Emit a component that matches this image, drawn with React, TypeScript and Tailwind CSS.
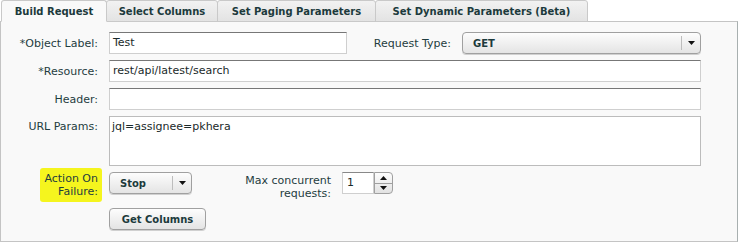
import React from "react";

const font = { fontFamily: '"DejaVu Sans", Verdana, sans-serif' };

function Tab({ label, active, w }: { label: string; active?: boolean; w: string }) {
  return (
    <div
      className={
        "h-[22px] flex items-center justify-center text-[10px] font-bold text-[#1c3a3c] border border-[#c9c9c9] rounded-t-[3px] -mr-px " +
        w +
        (active
          ? " bg-[#f9f9f9] border-b-[#f9f9f9] relative z-10"
          : " bg-gradient-to-b from-[#f2f2f2] to-[#e3e3e3]")
      }
    >
      {label}
    </div>
  );
}

function Arrow({ up }: { up?: boolean }) {
  return (
    <svg width="7" height="4" viewBox="0 0 7 4" className="block">
      {up ? <path d="M0 4 L3.5 0 L7 4 Z" fill="#111" /> : <path d="M0 0 L7 0 L3.5 4 Z" fill="#111" />}
    </svg>
  );
}

function Select({ value, w }: { value: string; w: string }) {
  return (
    <div
      className={
        "h-[22px] flex items-center rounded-[4px] border border-[#a0a0a0] bg-gradient-to-b from-[#fdfdfd] to-[#e4e4e4] shadow-[0_1px_0_#d0d0d0] " +
        w
      }
    >
      <div className="flex-1 pl-[10px] text-[10px] font-bold text-[#1c3a3c]">{value}</div>
      <div className="w-px h-[14px] bg-[#bdbdbd]" />
      <div className="w-[18px] flex justify-center">
        <Arrow />
      </div>
    </div>
  );
}

export default function App() {
  const label = "text-[11px] text-[#1f3d3f] text-right leading-[13px]";
  const input = "h-[22px] bg-white border border-[#cfcfcf] border-t-[#777] px-[3px] text-[11px] text-[#1a2a2a] flex items-center";
  return (
    <div className="w-[742px] h-[242px] bg-white" style={font}>
      <div className="flex pl-px h-[22px]">
        <Tab label="Build Request" active w="w-[106px]" />
        <Tab label="Select Columns" w="w-[112px]" />
        <Tab label="Set Paging Parameters" w="w-[159px]" />
        <Tab label="Set Dynamic Parameters (Beta)" w="w-[213px]" />
      </div>
      <div className="w-[738px] h-[221px] -mt-px bg-[#f9f9f9] border border-[#c4c4c4] border-r-[#a8b0b0] pt-[10px]">
        <div className="flex flex-col gap-[6px]">
          <div className="flex items-center">
            <div className={label + " w-[97px]"}>*Object Label:</div>
            <div className={input + " ml-[11px] w-[238px]"}>Test</div>
            <div className={label + " w-[104px]"}>Request Type:</div>
            <Select value="GET" w="ml-[11px] w-[239px]" />
          </div>
          <div className="flex items-center">
            <div className={label + " w-[97px]"}>*Resource:</div>
            <div className={input + " ml-[11px] w-[592px]"}>rest/api/latest/search</div>
          </div>
          <div className="flex items-center">
            <div className={label + " w-[97px]"}>Header:</div>
            <div className={input + " ml-[11px] w-[592px]"}></div>
          </div>
          <div className="flex items-start">
            <div className={label + " w-[97px] pt-[4px]"}>URL Params:</div>
            <div className="ml-[11px] w-[592px] h-[50px] bg-white border border-[#bcbcbc] px-[2px] pt-[2px] text-[11px] text-[#1a2a2a]">
              jql=assignee=pkhera
            </div>
          </div>
        </div>
        <div className="flex items-start mt-[6px] h-[29px]">
          <div className="w-[101px] flex justify-end -mt-[4px]">
            <div className={label + " bg-[#f5f51e] pl-[4px] pr-[4px] py-[4px] rounded-[3px]"}>
              Action On
              <br />
              Failure:
            </div>
          </div>
          <Select value="Stop" w="ml-[7px] w-[83px]" />
          <div className={label + " w-[139px] pt-[2px]"}>
            Max concurrent
            <br />
            requests:
          </div>
          <div className="ml-[11px] flex h-[22px]">
            <div className="w-[32px] h-[22px] bg-white border border-[#cfcfcf] border-t-[#888] pl-[4px] text-[11px] flex items-center text-[#1a2a2a]">
              1
            </div>
            <div className="w-[19px] h-[22px] border border-[#a0a0a0] rounded-r-[4px] bg-gradient-to-b from-[#fdfdfd] to-[#e2e2e2] flex flex-col">
              <div className="flex-1 flex items-center justify-center border-b border-[#a0a0a0]">
                <Arrow up />
              </div>
              <div className="flex-1 flex items-center justify-center">
                <Arrow />
              </div>
            </div>
          </div>
        </div>
        <div className="ml-[108px] mt-[7px]">
          <div className="w-[97px] h-[22px] rounded-[4px] border border-[#a0a0a0] bg-gradient-to-b from-[#fdfdfd] to-[#e4e4e4] shadow-[0_1px_0_#d0d0d0] flex items-center justify-center text-[10px] font-bold text-[#1c3a3c]">
            Get Columns
          </div>
        </div>
      </div>
    </div>
  );
}
